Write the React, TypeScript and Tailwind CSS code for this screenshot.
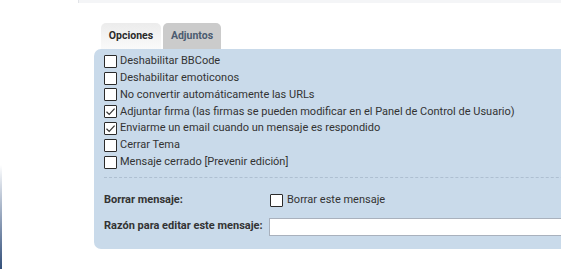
import React from "react";

const OPTIONS = [
  { label: "Deshabilitar BBCode", checked: false },
  { label: "Deshabilitar emoticonos", checked: false },
  { label: "No convertir automáticamente las URLs", checked: false },
  { label: "Adjuntar firma (las firmas se pueden modificar en el Panel de Control de Usuario)", checked: true },
  { label: "Enviarme un email cuando un mensaje es respondido", checked: true },
  { label: "Cerrar Tema", checked: false },
  { label: "Mensaje cerrado [Prevenir edición]", checked: false },
];

function Box({ checked }: { checked?: boolean }) {
  return (
    <span className="w-[13px] h-[13px] shrink-0 bg-white border border-[#2b2b2b] rounded-[1px] flex items-center justify-center">
      {checked && (
        <svg width="11" height="11" viewBox="0 0 11 11">
          <path d="M1.5 5.8 L4.2 8.4 L9.6 2.6" fill="none" stroke="#333" strokeWidth="1.2" />
        </svg>
      )}
    </span>
  );
}

export default function App() {
  return (
    <div className="relative w-[561px] h-[269px] overflow-hidden bg-white font-['Roboto','Liberation_Sans',sans-serif] text-[#333]">
      {/* restos del bloque superior */}
      <div className="ml-[78px] h-[3px] bg-[#f4f5f7] border-l border-[#e2e4e8]" />
      {/* borde izquierdo */}
      <div className="absolute left-0 top-[165px] w-[2px] h-[104px] bg-gradient-to-b from-white to-[#34507a]" />

      <div className="ml-[94px] mt-[20px] w-[520px]">
        <div className="flex gap-[2px] pl-[7px] h-[26px]">
          <div className="w-[60px] rounded-t-[5px] bg-gradient-to-b from-[#ececec] to-[#fafafa] flex items-center justify-center text-[10.5px] font-bold text-[#2a2a2a]">
            Opciones
          </div>
          <div className="w-[58px] rounded-t-[5px] bg-[#cbcbcb] flex items-center justify-center text-[10.5px] font-bold text-[#4b5b70]">
            Adjuntos
          </div>
        </div>

        <div className="bg-[#c9daea] rounded-[7px] h-[200px] pt-[4px] pl-[10px]">
          <div className="flex flex-col">
            {OPTIONS.map((o, i) => (
              <label key={i} className="flex items-center gap-[3px] h-[16.8px] text-[11px] whitespace-nowrap">
                <Box checked={o.checked} />
                <span>{o.label}</span>
              </label>
            ))}
          </div>

          <div className="mt-[6px] border-t border-dashed border-[#aebfd1]" />

          <div className="flex items-center h-[22px] mt-[12px] text-[11px]">
            <span className="w-[166px] font-bold">Borrar mensaje:</span>
            <Box />
            <span className="ml-[4px]">Borrar este mensaje</span>
          </div>
          <div className="flex items-center h-[22px] mt-[4px] text-[11px]">
            <span className="w-[165px] font-bold">Razón para editar este mensaje:</span>
            <div className="flex-1 h-[18px] bg-white border border-[#a9b1bd]" />
          </div>
        </div>
      </div>
    </div>
  );
}
